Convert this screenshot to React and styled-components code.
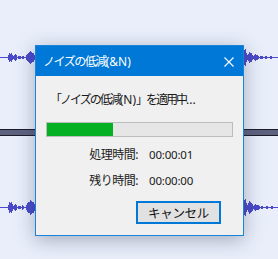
import React from 'react';
import styled, { createGlobalStyle } from 'styled-components';

const Global = createGlobalStyle`
  html, body {
    margin: 0;
    padding: 0;
    background: #e9eefa;
    font-family: "Noto Sans", "Noto Sans CJK JP", sans-serif;
  }
`;

const Screen = styled.div`
  position: relative;
  width: 278px;
  height: 259px;
  overflow: hidden;
  background: #e9eefa;
  display: flex;
  flex-direction: column;
`;

const Track = styled.div`
  height: ${p => p.h}px;
  flex: none;
`;

const Divider = styled.div`
  height: 5px;
  flex: none;
  background: #5d627e;
  border-top: 1px solid #1a1c2a;
  border-bottom: 1px solid #1a1c2a;
`;

const Dialog = styled.div`
  position: absolute;
  left: 35px;
  top: 45px;
  width: 207px;
  height: 189px;
  border: 1px solid #1a84d8;
  background: #f0f0f0;
  box-shadow: 0 4px 18px rgba(40, 50, 80, 0.35);
  display: flex;
  flex-direction: column;
`;

const TitleBar = styled.div`
  height: 30px;
  background: #0078d7;
  color: #fff;
  display: flex;
  align-items: center;
  justify-content: space-between;
  padding: 0 9px 0 7px;
  font-size: 12px;
`;

const Jp = styled.span`
  letter-spacing: ${p => p.tight || -1.5}px;
`;

const Close = styled.svg`
  width: 10px;
  height: 10px;
  margin-top: 1px;
`;

const Body = styled.div`
  flex: 1;
  padding: 16px 10px 0 10px;
  display: flex;
  flex-direction: column;
  font-size: 12px;
  color: #1a1a1a;
`;

const Message = styled.div`
  height: 16px;
  line-height: 16px;
  padding-left: 4px;
  white-space: nowrap;
`;

const Progress = styled.div`
  margin-top: 14px;
  height: 13px;
  border: 1px solid #bcbcbc;
  background: #e6e6e6;
`;

const Fill = styled.div`
  height: 100%;
  background: #06b025;
`;

const Times = styled.div`
  margin-top: 10px;
  display: grid;
  grid-template-columns: 92px auto;
  column-gap: 11px;
  row-gap: 10px;
  line-height: 16px;
`;

const Label = styled.div`
  text-align: right;
  letter-spacing: -0.5px;
`;

const Value = styled.div`
  font-size: 11.5px;
  letter-spacing: -0.2px;
`;

const Actions = styled.div`
  margin-top: 12px;
  display: flex;
  justify-content: flex-end;
  padding-right: 12px;
`;

const Button = styled.button`
  width: 85px;
  height: 23px;
  box-sizing: border-box;
  border: 2px solid #0078d7;
  background: #e1e1e1;
  font-family: inherit;
  font-size: 12.5px;
  color: #111;
  padding: 0;
  letter-spacing: -0.3px;
`;

function rnd(i) {
  const x = Math.sin(i * 12.9898) * 43758.5453;
  return x - Math.floor(x);
}

function wavePath(cy, bursts) {
  let d = `M0 ${cy + 0.5} H278 `;
  bursts.forEach(([x0, w, amp], bi) => {
    for (let i = 0; i < w; i++) {
      const env = Math.sin((Math.PI * (i + 0.5)) / w) ** 0.5;
      const a = Math.max(1, Math.round(amp * env * (0.65 + 0.35 * rnd(bi * 50 + i))));
      d += `M${x0 + i + 0.5} ${cy - a} V${cy + a + 1} `;
    }
  });
  return d;
}

function Wave({ cy, bursts, h }) {
  return (
    <svg width="278" height={h} style={{ display: 'block' }}>
      <path d={wavePath(cy, bursts)} stroke="#4a4ac8" strokeWidth="1" fill="none" shapeRendering="crispEdges" />
    </svg>
  );
}

const topBursts = [
  [8, 5, 5], [13, 4, 3], [18, 3, 1], [22, 2, 1], [26, 9, 6],
  [243, 4, 9], [247, 6, 5], [253, 6, 3], [260, 3, 1], [265, 2, 1], [270, 2, 1],
];
const bottomBursts = [
  [8, 5, 6], [13, 4, 3], [18, 3, 1], [22, 2, 2], [26, 9, 7],
  [243, 4, 9], [247, 6, 6], [253, 7, 3], [261, 2, 1], [266, 2, 1], [271, 2, 1],
];

export default function App() {
  return (
    <>
      <Global />
      <Screen>
        <Track h={129}>
          <Wave h={129} cy={57} bursts={topBursts} />
        </Track>
        <Divider />
        <Track h={123}>
          <Wave h={123} cy={71} bursts={bottomBursts} />
        </Track>
        <Dialog>
          <TitleBar>
            <span>
              <Jp tight={-1.5}>ノイズの低減</Jp>(&amp;N)
            </span>
            <Close viewBox="0 0 10 10">
              <path d="M0.5 0.5 L9.5 9.5 M9.5 0.5 L0.5 9.5" stroke="#fff" strokeWidth="1.1" />
            </Close>
          </TitleBar>
          <Body>
            <Message>
              <Jp tight={-2}>「ノイズの低減</Jp>(N)<Jp tight={-2}>」を適用中</Jp>...
            </Message>
            <Progress>
              <Fill style={{ width: '35.5%' }} />
            </Progress>
            <Times>
              <Label>処理時間:</Label>
              <Value>00:00:01</Value>
              <Label>残り時間:</Label>
              <Value>00:00:00</Value>
            </Times>
            <Actions>
              <Button>キャンセル</Button>
            </Actions>
          </Body>
        </Dialog>
      </Screen>
    </>
  );
}
